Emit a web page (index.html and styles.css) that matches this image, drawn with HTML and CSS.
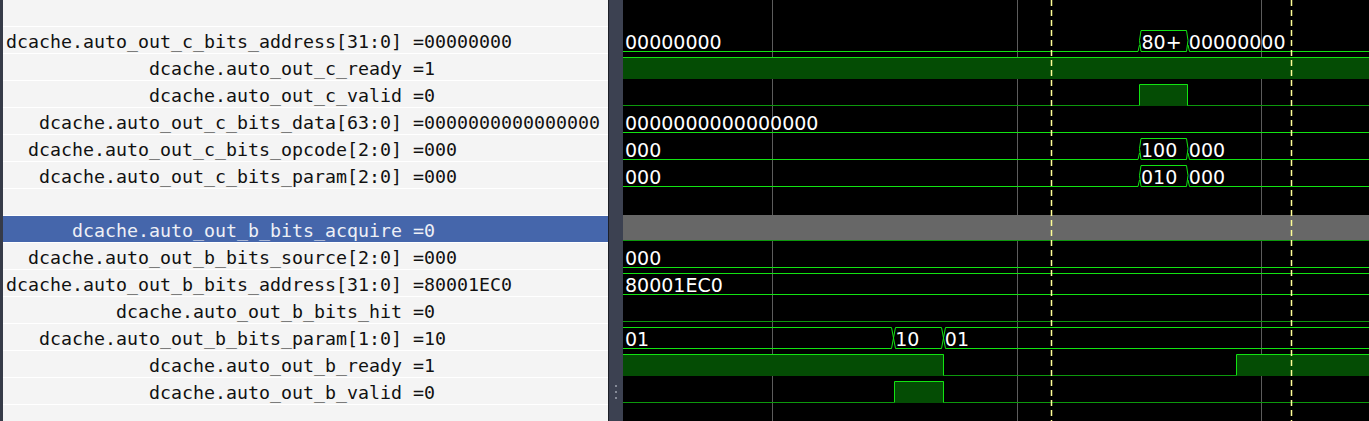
FILE: index.html
```html
<!DOCTYPE html>
<html>
<head>
<meta charset="utf-8">
<link rel="stylesheet" href="styles.css">
</head>
<body>
<div class="app">
  <div class="edge"></div>
  <div class="names">
    <div class="row"></div>
    <div class="row"><span class="name">dcache.auto_out_c_bits_address[31:0] </span><span class="val">=00000000</span></div>
    <div class="row"><span class="name">dcache.auto_out_c_ready </span><span class="val">=1</span></div>
    <div class="row"><span class="name">dcache.auto_out_c_valid </span><span class="val">=0</span></div>
    <div class="row"><span class="name">dcache.auto_out_c_bits_data[63:0] </span><span class="val">=0000000000000000</span></div>
    <div class="row"><span class="name">dcache.auto_out_c_bits_opcode[2:0] </span><span class="val">=000</span></div>
    <div class="row"><span class="name">dcache.auto_out_c_bits_param[2:0] </span><span class="val">=000</span></div>
    <div class="row"></div>
    <div class="row sel"><span class="name">dcache.auto_out_b_bits_acquire </span><span class="val">=0</span></div>
    <div class="row"><span class="name">dcache.auto_out_b_bits_source[2:0] </span><span class="val">=000</span></div>
    <div class="row"><span class="name">dcache.auto_out_b_bits_address[31:0] </span><span class="val">=80001EC0</span></div>
    <div class="row"><span class="name">dcache.auto_out_b_bits_hit </span><span class="val">=0</span></div>
    <div class="row"><span class="name">dcache.auto_out_b_bits_param[1:0] </span><span class="val">=10</span></div>
    <div class="row"><span class="name">dcache.auto_out_b_ready </span><span class="val">=1</span></div>
    <div class="row"><span class="name">dcache.auto_out_b_valid </span><span class="val">=0</span></div>
    <div class="row"></div>
  </div>
  <div class="divider">
    <span class="dot"></span><span class="dot"></span><span class="dot"></span>
  </div>
  <div class="waves">
    <svg class="canvas" width="746" height="421" viewBox="623 0 746 421" xmlns="http://www.w3.org/2000/svg">
      <!-- grid -->
      <g class="grid">
        <line x1="772.5" y1="0" x2="772.5" y2="421"/>
        <line x1="1017.5" y1="0" x2="1017.5" y2="421"/>
        <line x1="1261.5" y1="0" x2="1261.5" y2="421"/>
      </g>
      <!-- selection highlight -->
      <rect class="hl" x="623" y="215" width="746" height="25"/>

      <!-- fills -->
      <g class="fill">
        <rect x="623" y="57" width="746" height="22"/>
        <rect x="1140" y="84" width="48" height="22"/>
        <rect x="623" y="354" width="321" height="22"/>
        <rect x="1237" y="354" width="132" height="22"/>
        <rect x="895" y="381" width="49" height="22"/>
      </g>

      <!-- low lines (dark) -->
      <g class="low">
        <path d="M623,105.5 H1139.5 M1187.5,105.5 H1369"/>
        <path d="M623,240.5 H1369"/>
        <path d="M623,321.5 H1369"/>
        <path d="M943.5,375.5 H1236.5"/>
        <path d="M623,402.5 H894.5 M943.5,402.5 H1369"/>
      </g>

      <!-- high / bus lines (bright) -->
      <g class="hi">
        <!-- row 1 address -->
        <path d="M623,51.5 H1138 L1139.5,45"/>
        <path d="M1139.5,40.5 L1141,30.5 H1186.5 L1188,40.5 L1186.5,51.5 H1141 Z"/>
        <path d="M1188,45 L1189.5,51.5 H1369"/>
        <!-- row 2 ready -->
        <path d="M623,57.5 H1369"/>
        <!-- row 3 valid -->
        <path d="M1139.5,105.5 V84.5 H1187.5 V105.5"/>
        <!-- row 4 data -->
        <path d="M623,132.5 H1369"/>
        <!-- row 5 opcode -->
        <path d="M623,159.5 H1138 L1139.5,153"/>
        <path d="M1139.5,148.5 L1141,138.5 H1186.5 L1188,148.5 L1186.5,159.5 H1141 Z"/>
        <path d="M1188,153 L1189.5,159.5 H1369"/>
        <!-- row 6 param -->
        <path d="M623,186.5 H1138 L1139.5,180"/>
        <path d="M1139.5,175.5 L1141,165.5 H1186.5 L1188,175.5 L1186.5,186.5 H1141 Z"/>
        <path d="M1188,180 L1189.5,186.5 H1369"/>
        <!-- row 9 source -->
        <path d="M623,267.5 H1369"/>
        <!-- row 10 b address -->
        <path d="M623,273.5 H1369 M623,294.5 H1369"/>
        <!-- row 12 b param -->
        <path d="M623,327.5 H891.5 L893.5,338 L891.5,348.5 H623"/>
        <path d="M893.5,338 L895.5,327.5 H941.5 L943.5,338 L941.5,348.5 H895.5 Z"/>
        <path d="M1369,327.5 H945.5 L943.5,338 L945.5,348.5 H1369"/>
        <!-- row 13 b ready -->
        <path d="M623,354.5 H943.5 V375.5"/>
        <path d="M1236.5,375.5 V354.5 H1369"/>
        <!-- row 14 b valid -->
        <path d="M894.5,402.5 V381.5 H943.5 V402.5"/>
      </g>

      <!-- values -->
      <g class="vals">
        <text x="625" y="49">00000000</text>
        <text x="1141.5" y="49">80+</text>
        <text x="1188.8" y="49">00000000</text>
        <text x="625" y="130">0000000000000000</text>
        <text x="625" y="157">000</text>
        <text x="1141" y="157">100</text>
        <text x="1188.8" y="157">000</text>
        <text x="625" y="184">000</text>
        <text x="1141" y="184">010</text>
        <text x="1188.8" y="184">000</text>
        <text x="625" y="265">000</text>
        <text x="625" y="292">80001EC0</text>
        <text x="625" y="346">01</text>
        <text x="895.2" y="346">10</text>
        <text x="944.8" y="346">01</text>
      </g>

      <!-- cursors -->
      <g class="cursor">
        <line x1="1051.5" y1="0" x2="1051.5" y2="421"/>
        <line x1="1291.5" y1="0" x2="1291.5" y2="421"/>
      </g>
    </svg>
  </div>
</div>
</body>
</html>
```

FILE: styles.css
```css
html, body {
  margin: 0;
  padding: 0;
  background: #000;
}

.app {
  display: flex;
  width: 1369px;
  height: 421px;
  overflow: hidden;
}

.edge {
  width: 3px;
  flex: none;
  background: #363b48;
}

.names {
  width: 605px;
  flex: none;
  background: #f4f4f4;
  display: flex;
  flex-direction: column;
  overflow: hidden;
}

.row {
  flex: none;
  height: 22px;
  padding-top: 4px;
  border-bottom: 1px solid #ffffff;
  display: flex;
  font-family: "DejaVu Sans Mono", monospace;
  font-size: 18.27px;
  line-height: 22px;
  color: #111;
  white-space: pre;
}

.row.sel {
  background: #4566ab;
  color: #eef0f6;
}

.name {
  width: 410px;
  flex: none;
  text-align: right;
}

.val {
  flex: none;
}

.divider {
  width: 15px;
  flex: none;
  background: #3c4151;
  border-left: 1px solid #1c1f27;
  display: flex;
  flex-direction: column;
  align-items: center;
  justify-content: flex-end;
  gap: 4px;
  padding-bottom: 22px;
  box-sizing: border-box;
}

.dot {
  width: 2px;
  height: 2px;
  background: #858a97;
}

.waves {
  flex: none;
  width: 746px;
  background: #000;
}

.canvas {
  display: block;
}

.grid line {
  stroke: #5c5c5c;
  stroke-width: 1;
}

.hl {
  fill: #676767;
}

.fill rect {
  fill: #044c04;
}

.low path {
  fill: none;
  stroke: #0c980c;
  stroke-width: 1;
}

.hi path {
  fill: none;
  stroke: #12e312;
  stroke-width: 1;
}

.vals text {
  font-family: "DejaVu Sans", sans-serif;
  font-size: 19px;
  fill: #ffffff;
}

.cursor line {
  stroke: #ffff96;
  stroke-width: 1.5;
  stroke-dasharray: 6 4;
}
```
